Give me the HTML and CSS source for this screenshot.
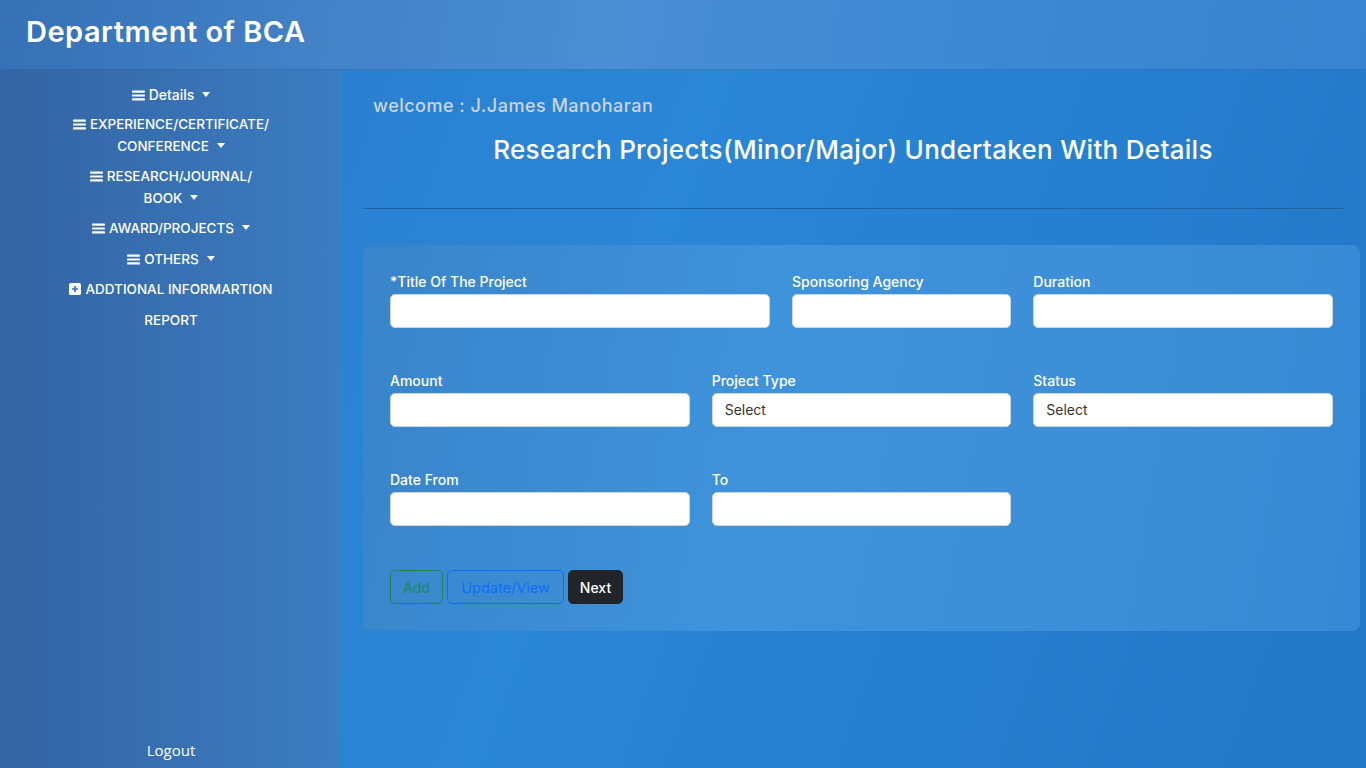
FILE: index.html
```html
<!DOCTYPE html>
<html lang="en">
<head>
<meta charset="utf-8">
<title>Department of BCA</title>
<link rel="stylesheet" href="styles.css">
</head>
<body>
<header class="topbar">
  <h1 class="brand">Department of BCA</h1>
</header>
<div class="layout">
  <aside class="sidebar">
    <nav class="nav">
      <a class="nav-item nav-details"><svg class="ico" viewBox="0 0 14 12"><rect x="0" y="0.5" width="14" height="2.4" rx="0.6"/><rect x="0" y="4.8" width="14" height="2.4" rx="0.6"/><rect x="0" y="9.1" width="14" height="2.4" rx="0.6"/></svg>Details<span class="caret"></span></a>
      <a class="nav-item"><svg class="ico" viewBox="0 0 14 12"><rect x="0" y="0.5" width="14" height="2.4" rx="0.6"/><rect x="0" y="4.8" width="14" height="2.4" rx="0.6"/><rect x="0" y="9.1" width="14" height="2.4" rx="0.6"/></svg>EXPERIENCE/CERTIFICATE/<br>CONFERENCE<span class="caret"></span></a>
      <a class="nav-item"><svg class="ico" viewBox="0 0 14 12"><rect x="0" y="0.5" width="14" height="2.4" rx="0.6"/><rect x="0" y="4.8" width="14" height="2.4" rx="0.6"/><rect x="0" y="9.1" width="14" height="2.4" rx="0.6"/></svg>RESEARCH/JOURNAL/<br>BOOK<span class="caret"></span></a>
      <a class="nav-item"><svg class="ico" viewBox="0 0 14 12"><rect x="0" y="0.5" width="14" height="2.4" rx="0.6"/><rect x="0" y="4.8" width="14" height="2.4" rx="0.6"/><rect x="0" y="9.1" width="14" height="2.4" rx="0.6"/></svg>AWARD/PROJECTS<span class="caret"></span></a>
      <a class="nav-item"><svg class="ico" viewBox="0 0 14 12"><rect x="0" y="0.5" width="14" height="2.4" rx="0.6"/><rect x="0" y="4.8" width="14" height="2.4" rx="0.6"/><rect x="0" y="9.1" width="14" height="2.4" rx="0.6"/></svg>OTHERS<span class="caret"></span></a>
      <a class="nav-item"><svg class="ico ico-plus" viewBox="0 0 13 13"><rect x="0" y="0" width="13" height="13" rx="2" fill="#fff"/><path d="M6.5 3.2v6.6M3.2 6.5h6.6" stroke="#3a72b4" stroke-width="1.8"/></svg>ADDTIONAL INFORMARTION</a>
      <a class="nav-item">REPORT</a>
    </nav>
    <a class="logout">Logout</a>
  </aside>
  <main class="main">
    <p class="welcome">welcome : J.James Manoharan</p>
    <h2 class="page-title">Research Projects(Minor/Major) Undertaken With Details</h2>
    <hr class="divider">
    <form class="card">
      <div class="grid">
        <div class="field span-5"><label>*Title Of The Project</label><input type="text"></div>
        <div class="field span-3"><label>Sponsoring Agency</label><input type="text"></div>
        <div class="field span-4"><label>Duration</label><input type="text"></div>
        <div class="field span-4"><label>Amount</label><input type="text"></div>
        <div class="field span-4"><label>Project Type</label><div class="select">Select</div></div>
        <div class="field span-4"><label>Status</label><div class="select">Select</div></div>
        <div class="field span-4"><label>Date From</label><input type="text"></div>
        <div class="field span-4"><label>To</label><input type="text"></div>
      </div>
      <div class="actions">
        <button type="button" class="btn btn-add">Add</button>
        <button type="button" class="btn btn-update">Update/View</button>
        <button type="button" class="btn btn-next">Next</button>
      </div>
    </form>
  </main>
</div>
</body>
</html>
```
FILE: styles.css
```css
* { box-sizing: border-box; }
html, body { margin: 0; height: 100%; }
body {
  font-family: "Inter", "Open Sans", sans-serif;
  color: #fff;
  background: linear-gradient(110deg, #2a7ccb 0%, #2a86d6 45%, #2277c6 100%);
  display: flex;
  flex-direction: column;
  overflow: hidden;
}
.topbar {
  height: 70px;
  flex: 0 0 70px;
  background: linear-gradient(100deg, #3670b5 0%, #4383c8 25%, #4a8ed3 45%, #3e89d3 70%, #3883cf 100%);
  border-bottom: 1px solid rgba(20, 70, 130, 0.25);
  border-bottom-left-radius: 4px;
  display: flex;
  align-items: center;
  padding-left: 26px;
}
.brand {
  margin: 0;
  font-size: 29px;
  font-weight: 600;
  letter-spacing: 0.5px;
  padding-bottom: 6px;
}
.layout {
  flex: 1;
  display: flex;
  min-height: 0;
}
.sidebar {
  width: 342px;
  flex: 0 0 342px;
  background: linear-gradient(90deg, #3464a3 0%, #3870b2 50%, #3b7ec2 100%);
  display: flex;
  flex-direction: column;
  align-items: center;
  padding: 9px 0 8px;
}
.nav {
  display: flex;
  flex-direction: column;
  align-items: center;
}
.nav-item {
  display: block;
  text-align: center;
  font-size: 13.5px;
  font-weight: 500;
  line-height: 21.5px;
  padding: 4.5px 0;
  color: #fff;
}
.nav-details { font-size: 14px; }
.ico {
  width: 13px;
  height: 11px;
  fill: #fff;
  margin-right: 4px;
  vertical-align: -1px;
}
.ico-plus { width: 12px; height: 12px; vertical-align: -1px; }
.caret {
  display: inline-block;
  width: 0; height: 0;
  border-left: 4.5px solid transparent;
  border-right: 4.5px solid transparent;
  border-top: 5px solid #fff;
  margin-left: 8px;
  vertical-align: 3px;
}
.logout {
  margin-top: auto;
  font-family: "Open Sans", "Noto Sans", sans-serif;
  font-size: 15px;
  color: #fff;
}
.main {
  flex: 1;
  padding: 0 6px 0 21px;
}
.welcome {
  margin: 24px 0 0 10px;
  font-size: 18px;
  letter-spacing: 0.5px;
  font-weight: 500;
  color: #cdd3da;
  line-height: 24px;
}
.page-title {
  margin: 16px 0 0;
  width: 980px;
  text-align: center;
  font-size: 26px;
  letter-spacing: 0.3px;
  font-weight: 500;
  line-height: 32px;
}
.divider {
  width: 980px;
  margin: 42px 0 0;
  border: 0;
  border-top: 1px solid #22609f;
}
.card {
  margin-top: 36px;
  width: 997px;
  border-radius: 8px;
  background: linear-gradient(100deg, #3984cb 0%, #3f93da 40%, #3d8fd8 70%, #3789d3 100%);
  padding: 28px 27px 27px;
}
.grid {
  display: grid;
  grid-template-columns: repeat(12, 1fr);
  column-gap: 22px;
  row-gap: 44px;
}
.span-5 { grid-column: span 5; }
.span-3 { grid-column: span 3; }
.span-4 { grid-column: span 4; }
.field label {
  display: block;
  font-size: 14px;
  font-weight: 500;
  line-height: 18px;
  margin-bottom: 3px;
}
.field input, .select {
  display: block;
  width: 100%;
  height: 34px;
  border: 1px solid #ced4da;
  border-radius: 5px;
  background: #fff;
  font-family: inherit;
}
.select {
  font-size: 14px;
  color: #333;
  line-height: 32px;
  padding-left: 12px;
}
.actions {
  display: flex;
  gap: 4px;
  margin-top: 44px;
}
.btn {
  height: 34px;
  border-radius: 5px;
  font-family: inherit;
  font-size: 14px;
  padding: 0 8px;
  background: transparent;
}
.btn-add { border: 1px solid #198754; color: #198754; width: 53px; }
.btn-update { border: 1px solid #0d6efd; color: #0d6efd; width: 117px; font-size: 14.5px; }
.btn-next { border: 1px solid #212529; background: #212529; color: #fff; font-weight: 500; width: 55px; }
```
